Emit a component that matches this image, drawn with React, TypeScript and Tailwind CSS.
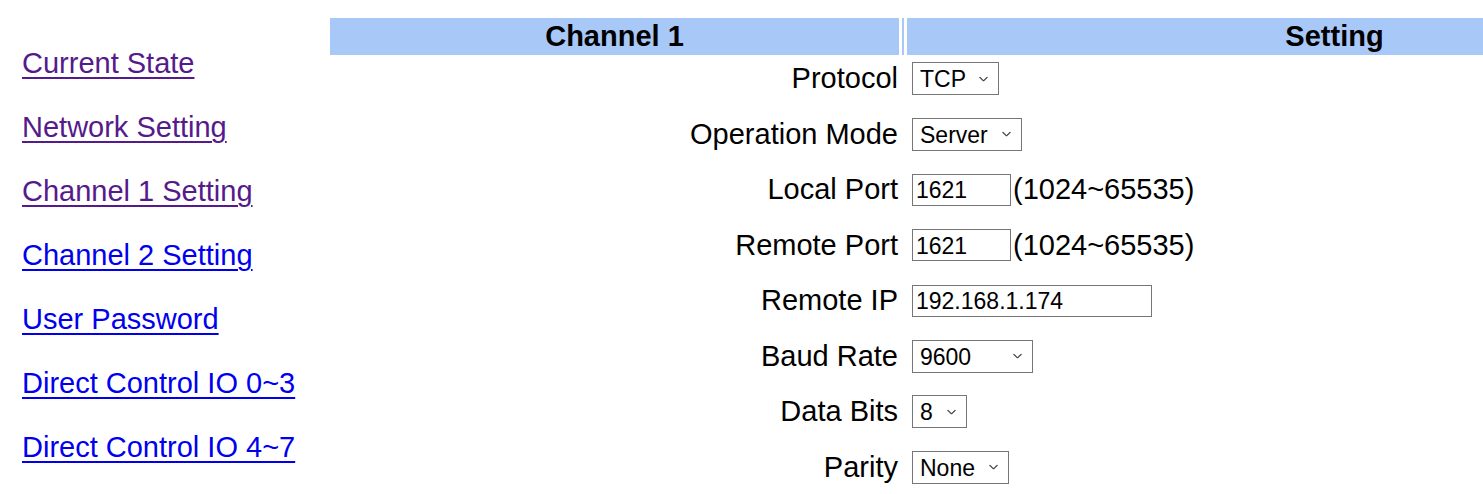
const navLinks = [
  { label: "Current State", visited: true },
  { label: "Network Setting", visited: true },
  { label: "Channel 1 Setting", visited: true },
  { label: "Channel 2 Setting", visited: false },
  { label: "User Password", visited: false },
  { label: "Direct Control IO 0~3", visited: false },
  { label: "Direct Control IO 4~7", visited: false },
];

type Row =
  | { label: string; kind: "select"; value: string; width: string }
  | { label: string; kind: "input"; value: string; width: string; hint?: string };

const rows: Row[] = [
  { label: "Protocol", kind: "select", value: "TCP", width: "w-[87px]" },
  { label: "Operation Mode", kind: "select", value: "Server", width: "w-[110px]" },
  { label: "Local Port", kind: "input", value: "1621", width: "w-[99px]", hint: "(1024~65535)" },
  { label: "Remote Port", kind: "input", value: "1621", width: "w-[99px]", hint: "(1024~65535)" },
  { label: "Remote IP", kind: "input", value: "192.168.1.174", width: "w-[240px]" },
  { label: "Baud Rate", kind: "select", value: "9600", width: "w-[121px]" },
  { label: "Data Bits", kind: "select", value: "8", width: "w-[55px]" },
  { label: "Parity", kind: "select", value: "None", width: "w-[97px]" },
];

function FakeSelect({ value, width }: { value: string; width: string }) {
  return (
    <div
      className={`relative flex h-[33px] items-center border border-[#767676] bg-white pl-[7px] pt-[2px] text-[23px] leading-none text-black ${width}`}
    >
      <span>{value}</span>
      {/* chevron */}
      <svg
        className="absolute right-[10px] top-1/2 -translate-y-1/2"
        width="9"
        height="5"
        viewBox="0 0 9 5"
        fill="none"
      >
        <path d="M0.5 0.5 L4.5 4.5 L8.5 0.5" stroke="#444" strokeWidth="1.1" />
      </svg>
    </div>
  );
}

function FakeInput({ value, width }: { value: string; width: string }) {
  return (
    <input
      readOnly
      value={value}
      className={`h-[32px] border border-[#767676] bg-white pl-[3px] pt-[2px] text-[23px] leading-none text-black outline-none ${width}`}
      style={{ fontFamily: "'Liberation Sans', Arial, sans-serif" }}
    />
  );
}

export default function App() {
  return (
    <div className="flex h-[494px] w-full overflow-hidden bg-white font-['Liberation_Sans',Arial,sans-serif] text-black">
      {/* Left nav */}
      <nav className="flex w-[330px] shrink-0 flex-col gap-[31px] pl-[22px] pt-[47px]">
        {navLinks.map((l) => (
          <a
            key={l.label}
            href="#"
            className={`text-[29px] leading-[33px] underline decoration-2 underline-offset-[4px] ${
              l.visited ? "text-[#551a8b]" : "text-[#0000ee]"
            }`}
          >
            {l.label}
          </a>
        ))}
      </nav>

      {/* Settings table */}
      <div className="shrink-0 pt-[18px]">
        <div className="flex h-[37px] w-[1432px]">
          <div className="flex w-[569px] shrink-0 items-center justify-center bg-[#a8c8f8] text-[29px] font-bold">
            Channel 1
          </div>
          <div className="w-[3px] shrink-0 bg-white" />
          <div className="w-[2px] shrink-0 bg-[#a8c8f8]" />
          <div className="w-[3px] shrink-0 bg-white" />
          <div className="flex w-[855px] shrink-0 items-center justify-center bg-[#a8c8f8] text-[29px] font-bold">
            Setting
          </div>
        </div>

        <div className="flex flex-col gap-[22.5px] pt-[7px]">
          {rows.map((r) => (
            <div key={r.label} className="flex h-[33px] items-center">
              <div className="w-[569px] shrink-0 pr-[1px] text-right text-[29px] leading-none">
                {r.label}
              </div>
              <div className="flex items-center pl-[13px]">
                {r.kind === "select" ? (
                  <FakeSelect value={r.value} width={r.width} />
                ) : (
                  <>
                    <FakeInput value={r.value} width={r.width} />
                    {r.hint && <span className="pl-[2px] text-[29px] leading-none">{r.hint}</span>}
                  </>
                )}
              </div>
            </div>
          ))}
        </div>
      </div>
    </div>
  );
}
